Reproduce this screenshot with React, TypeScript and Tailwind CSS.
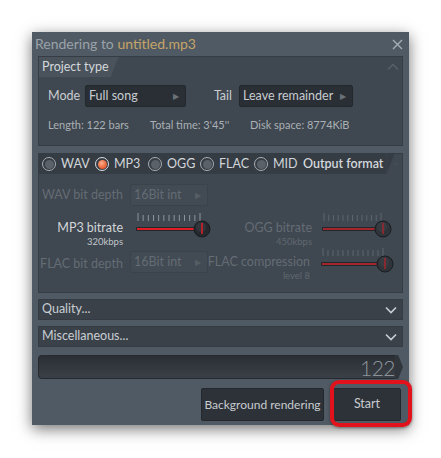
import React from 'react';

const font = { fontFamily: 'Lato, "Open Sans", sans-serif' };

function ChevronUp({ className = '' }: { className?: string }) {
  return (
    <svg width="12" height="8" viewBox="0 0 12 8" className={className}>
      <path d="M1 6.5 L6 1.5 L11 6.5" fill="none" stroke="currentColor" strokeWidth="1.3" />
    </svg>
  );
}

function ChevronDown() {
  return (
    <svg width="12" height="8" viewBox="0 0 12 8" className="text-[#c9ced3]">
      <path d="M1 1.5 L6 6.5 L11 1.5" fill="none" stroke="currentColor" strokeWidth="1.6" />
    </svg>
  );
}

function Dropdown({ label, width, dim }: { label: string; width: string; dim?: boolean }) {
  return (
    <div
      className={`${width} h-[22px] flex items-center justify-between pl-[3px] pr-[6px] rounded-[2px] border whitespace-nowrap ${
        dim ? 'bg-[#424a53] border-[#3b424a] text-[#646c74]' : 'bg-[#2a2f35] border-[#23282d] text-[#c8ccd0]'
      } text-[12.5px]`}
    >
      <span>{label}</span>
      <span className={`text-[8px] ${dim ? 'text-[#555d65]' : 'text-[#6a7178]'}`}>▶</span>
    </div>
  );
}

function Radio({ label, on, width }: { label: string; on?: boolean; width: string }) {
  return (
    <div className={`${width} flex items-center gap-[5px]`}>
      <div
        className={`w-[14px] h-[14px] rounded-full border-[1.5px] flex items-center justify-center ${
          on ? 'border-[#d8dcdf]' : 'border-[#a8aeb3]'
        }`}
      >
        <div
          className={`w-[9px] h-[9px] rounded-full ${
            on ? 'bg-[radial-gradient(circle_at_40%_35%,#ffb08a,#e3582f_70%)]' : 'bg-[#5a6168]'
          }`}
        />
      </div>
      <span className="text-[#d2d6d9] text-[12.5px]">{label}</span>
    </div>
  );
}

function Slider({ width, dim }: { width: number; dim?: boolean }) {
  const ticks = 13;
  const tickCol = dim ? '#5c646c' : '#8d9399';
  const track = dim ? '#a3262d' : '#e01e26';
  return (
    <svg width={width + 10} height="26" viewBox={`0 0 ${width + 10} 26`}>
      {Array.from({ length: ticks }).map((_, i) => {
        const x = 2 + (i * (width - 6)) / (ticks - 1);
        return (
          <line
            key={i}
            x1={x}
            x2={x}
            y1={i === 0 || i === ticks - 1 ? 1 : 3}
            y2="9"
            stroke={tickCol}
            strokeWidth="1"
          />
        );
      })}
      <rect x="0" y="15" width={width - 4} height="4" rx="1" fill="#23272b" />
      <rect x="1" y="16" width={width - 6} height="2" fill={track} />
      <circle cx={width - 2} cy="17" r="8" fill={dim ? '#2f343a' : '#25292e'} stroke="#1a1d20" />
      <circle cx={width - 3} cy="15" r="5" fill={dim ? '#3d434a' : '#3a4047'} opacity="0.6" />
      <line x1={width - 2} x2={width - 2} y1="11" y2="22" stroke={track} strokeWidth="1.5" />
    </svg>
  );
}

function Collapsed({ label }: { label: string }) {
  return (
    <div className="h-[21px] bg-[#3a4149] border border-[#343b42] flex items-center justify-between pl-[3px] pr-[5px]">
      <span className="text-[#c9ced3] text-[12.5px]">{label}</span>
      <ChevronDown />
    </div>
  );
}

export default function App() {
  return (
    <div className="w-[441px] h-[458px] bg-white pt-[32px] pl-[32px] whitespace-nowrap" style={font}>
      <div className="relative w-[377px] h-[393px] bg-[#505a64] shadow-[0_4px_14px_rgba(0,0,0,0.55)] flex flex-col">
        {/* title */}
        <div className="h-[24px] flex items-center justify-between pl-[3px] pr-[6px]">
          <div className="text-[14px] leading-none">
            <span className="text-[#9aa2a9]">Rendering to </span>
            <span className="text-[#c6a468]">untitled.mp3</span>
          </div>
          <svg width="11" height="11" viewBox="0 0 11 11" className="text-[#a6adb3]">
            <path d="M1 1 L10 10 M10 1 L1 10" stroke="currentColor" strokeWidth="1.4" />
          </svg>
        </div>

        <div className="flex flex-col px-[6px]">
          {/* project type */}
          <div className="h-[90px] bg-[#3f4750] border border-[#353c43] flex flex-col">
            <div className="h-[20px] flex items-start justify-between">
              <div className="h-[20px] flex items-center">
                <div className="h-full bg-[#4a535c] flex items-center pl-[3px] pr-[2px] text-[#d4d8db] text-[12.5px]">
                  Project type
                </div>
                <div className="h-full w-[8px] bg-[#4a535c] [clip-path:polygon(0_0,100%_0,0_100%)]" />
              </div>
              <ChevronUp className="text-[#59616a] mt-[6px] mr-[3px]" />
            </div>
            <div className="flex items-center mt-[8px] pl-[9px] text-[12.5px] text-[#c8ccd0]">
              <span className="w-[37px]">Mode</span>
              <Dropdown label="Full song" width="w-[101px]" />
              <span className="w-[53px] text-right pr-[7px]">Tail</span>
              <Dropdown label="Leave remainder" width="w-[114px]" />
            </div>
            <div className="flex items-center mt-[10px] pl-[9px] text-[11px] text-[#aab0b5]">
              <span className="w-[102px]">Length: 122 bars</span>
              <span className="w-[100px]">Total time: 3'45''</span>
              <span>Disk space: 8774KiB</span>
            </div>
          </div>

          {/* output format */}
          <div className="mt-[7px] h-[140px] bg-[#3f4750] border border-[#353c43] flex flex-col">
            <div className="h-[20px] flex items-center justify-between">
              <div className="h-[20px] flex items-center">
                <div className="h-full bg-[#353c44] flex items-center pl-[3px] pr-[3px]">
                  <Radio label="WAV" width="w-[53px]" />
                  <Radio label="MP3" on width="w-[53px]" />
                  <Radio label="OGG" width="w-[52px]" />
                  <Radio label="FLAC" width="w-[54px]" />
                  <Radio label="MID" width="w-[49px]" />
                  <span className="text-[#d4d8db] text-[12.5px] font-semibold">Output format</span>
                </div>
                <div className="h-full w-[8px] bg-[#353c44] [clip-path:polygon(0_0,100%_0,0_100%)]" />
              </div>
              <ChevronUp className="text-[#59616a] mr-[3px]" />
            </div>

            <div className="flex items-center mt-[10px]">
              <span className="w-[84px] text-right text-[12.5px] text-[#646c74]">WAV bit depth</span>
              <div className="ml-[7px]">
                <Dropdown label="16Bit int" width="w-[78px]" dim />
              </div>
            </div>

            <div className="flex mt-[8px]">
              <div className="flex items-start">
                <div className="w-[84px] flex flex-col items-end mt-[6px]">
                  <span className="text-[12.5px] text-[#d2d6d9] leading-[16px]">MP3 bitrate</span>
                  <span className="text-[9.5px] text-[#c0c5c9] leading-[12px]">320kbps</span>
                </div>
                <div className="ml-[13px] mt-[-2px]">
                  <Slider width={68} />
                </div>
              </div>
              <div className="flex items-start ml-[8px]">
                <div className="w-[90px] flex flex-col items-end mt-[6px]">
                  <span className="text-[12.5px] text-[#646c74] leading-[16px]">OGG bitrate</span>
                  <span className="text-[9.5px] text-[#5f676f] leading-[12px]">450kbps</span>
                </div>
                <div className="ml-[10px] mt-[-2px]">
                  <Slider width={63} dim />
                </div>
              </div>
            </div>

            <div className="flex mt-[3px]">
              <div className="flex items-start">
                <span className="w-[84px] text-right text-[12.5px] text-[#646c74] mt-[4px]">FLAC bit depth</span>
                <div className="ml-[7px]">
                  <Dropdown label="16Bit int" width="w-[78px]" dim />
                </div>
              </div>
              <div className="flex items-start ml-[10px]">
                <div className="w-[92px] flex flex-col items-end mt-[3px]">
                  <span className="text-[12.5px] text-[#646c74] leading-[16px]">FLAC compression</span>
                  <span className="text-[9.5px] text-[#5f676f] leading-[12px]">level 8</span>
                </div>
                <div className="ml-[11px] mt-[-4px]">
                  <Slider width={66} dim />
                </div>
              </div>
            </div>
          </div>

          <div className="mt-[6px]">
            <Collapsed label="Quality..." />
          </div>
          <div className="mt-[6px]">
            <Collapsed label="Miscellaneous..." />
          </div>

          {/* progress */}
          <div className="mt-[8px] h-[24px] flex">
            <div className="flex-1 bg-[linear-gradient(#2a2f34,#3a4047)] rounded-l-[4px] border border-[#262a2f] border-r-0 flex items-center justify-end">
              <span className="text-[#8d949a] text-[21px] font-light leading-none tracking-[-0.5px]">122</span>
            </div>
            <div className="w-[8px] bg-[#30363c] [clip-path:polygon(0_0,40%_0,100%_50%,40%_100%,0_100%)]" />
          </div>

          {/* buttons */}
          <div className="mt-[9px] flex justify-end gap-[9px] pr-[2px]">
            <div className="w-[123px] h-[33px] bg-[#2d3238] border border-[#24282c] rounded-[2px] flex items-center justify-center text-[12px] text-[#c8ccd0]">
              Background rendering
            </div>
            <div className="w-[68px] h-[33px] bg-[#2d3238] border border-[#24282c] rounded-[2px] flex items-center justify-center text-[12.5px] text-[#c8ccd0]">
              Start
            </div>
          </div>
        </div>

        {/* highlight around Start */}
        <div className="absolute left-[298px] top-[348px] w-[82px] h-[47px] border-[4px] border-[#e2121c] rounded-[9px] shadow-[0_1px_3px_rgba(0,0,0,0.4)]" />
      </div>
    </div>
  );
}
